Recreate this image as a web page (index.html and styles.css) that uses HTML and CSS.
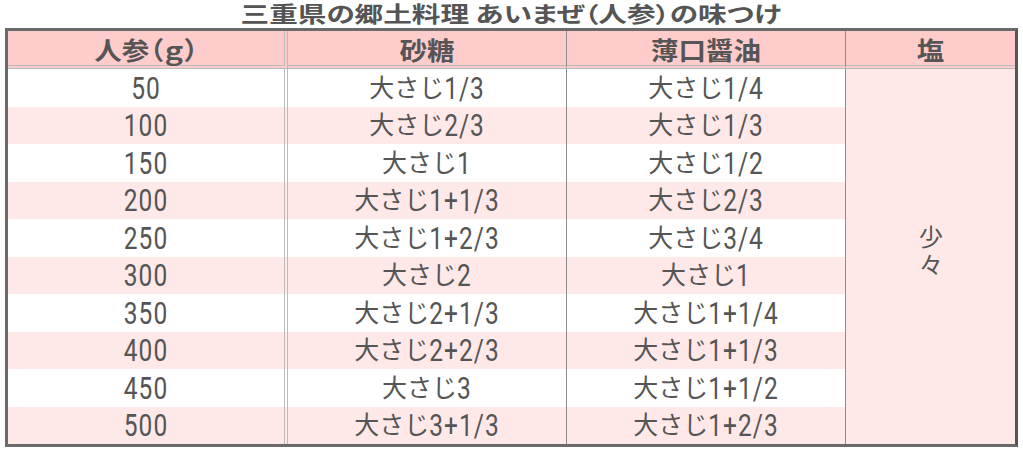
FILE: index.html
```html
<!DOCTYPE html>
<html lang="ja">
<head>
<meta charset="utf-8">
<title>あいまぜ(人参)の味つけ</title>
<link rel="stylesheet" href="styles.css">
</head>
<body>
<div class="wrap">
  <h1 class="title"><span class="title-text">三重県の郷土料理 あいまぜ（人参）の味つけ</span></h1>
  <table class="recipe">
    <colgroup>
      <col class="w1"><col class="w2"><col class="w3"><col class="w4">
    </colgroup>
    <thead>
      <tr>
        <th class="c1"><span class="h">人参（ｇ）</span></th>
        <th class="c2"><span class="h">砂糖</span></th>
        <th class="c3"><span class="h">薄口醤油</span></th>
        <th class="c4"><span class="h">塩</span></th>
      </tr>
    </thead>
    <tbody>
      <tr class="odd"><td class="c1"><span class="n">50</span></td><td class="c2">大さじ<span class="n">1/3</span></td><td class="c3">大さじ<span class="n">1/4</span></td><td class="c4 salt" rowspan="10"><span class="salt-text">少々</span></td></tr>
      <tr class="even"><td class="c1"><span class="n">100</span></td><td class="c2">大さじ<span class="n">2/3</span></td><td class="c3">大さじ<span class="n">1/3</span></td></tr>
      <tr class="odd"><td class="c1"><span class="n">150</span></td><td class="c2">大さじ<span class="n">1</span></td><td class="c3">大さじ<span class="n">1/2</span></td></tr>
      <tr class="even"><td class="c1"><span class="n">200</span></td><td class="c2">大さじ<span class="n">1+1/3</span></td><td class="c3">大さじ<span class="n">2/3</span></td></tr>
      <tr class="odd"><td class="c1"><span class="n">250</span></td><td class="c2">大さじ<span class="n">1+2/3</span></td><td class="c3">大さじ<span class="n">3/4</span></td></tr>
      <tr class="even"><td class="c1"><span class="n">300</span></td><td class="c2">大さじ<span class="n">2</span></td><td class="c3">大さじ<span class="n">1</span></td></tr>
      <tr class="odd"><td class="c1"><span class="n">350</span></td><td class="c2">大さじ<span class="n">2+1/3</span></td><td class="c3">大さじ<span class="n">1+1/4</span></td></tr>
      <tr class="even"><td class="c1"><span class="n">400</span></td><td class="c2">大さじ<span class="n">2+2/3</span></td><td class="c3">大さじ<span class="n">1+1/3</span></td></tr>
      <tr class="odd"><td class="c1"><span class="n">450</span></td><td class="c2">大さじ<span class="n">3</span></td><td class="c3">大さじ<span class="n">1+1/2</span></td></tr>
      <tr class="even"><td class="c1"><span class="n">500</span></td><td class="c2">大さじ<span class="n">3+1/3</span></td><td class="c3">大さじ<span class="n">1+2/3</span></td></tr>
    </tbody>
  </table>
</div>
</body>
</html>
```

FILE: styles.css
```css
html, body {
  margin: 0;
  padding: 0;
  background: #ffffff;
}
body {
  font-family: "Noto Sans CJK JP", "Noto Sans", sans-serif;
  color: #555555;
}
.wrap {
  padding: 0 6px 0 5px;
}
.title {
  margin: 0;
  height: 28px;
  line-height: 25px;
  font-size: 22px;
  font-weight: 700;
  text-align: center;
  color: #555555;
}
.title-text {
  display: inline-block;
  line-height: 25px;
  font-feature-settings: "palt";
  transform: scaleX(1.3);
}
.recipe {
  width: 1013px;
  table-layout: fixed;
  border-collapse: separate;
  border-spacing: 0;
  border: 3px solid #6a6a6a;
  border-right-color: #555555;
}
.w1 { width: 280px; }
.w2 { width: 279px; }
.w3 { width: 279px; }
.w4 { width: 169px; }
.recipe th, .recipe td {
  box-sizing: border-box;
  padding: 0;
  text-align: center;
  vertical-align: middle;
}
.recipe th {
  height: 38px;
  background: #ffcccc;
  font-size: 25px;
  font-weight: 700;
  line-height: 30px;
  border-bottom: 4px double #bbbbbb;
  padding-top: 1px;
}
.h {
  display: inline-block;
  font-feature-settings: "palt";
  transform: scaleX(1.1);
}
.recipe td {
  height: 37.5px;
  font-size: 25px;
  line-height: 30px;
  padding-bottom: 4px;
}
.recipe .c1 { border-right: 4px double #bbbbbb; }
.recipe .c2 { border-right: 1px solid #8c8c8c; }
.recipe .c3 { border-right: 1px solid #8c8c8c; }
.odd td { background: #ffffff; }
.even td { background: #ffe8e8; }
.recipe td.salt {
  background: #ffe8e8;
  padding-bottom: 4px;
}
.salt-text {
  display: inline-block;
  writing-mode: vertical-rl;
  text-orientation: upright;
  font-size: 24px;
  line-height: 30px;
  letter-spacing: 4px;
}
.n {
  display: inline-block;
  font-family: Roboto, "Liberation Sans", sans-serif;
  font-size: 24.5px;
  line-height: 25px;
  letter-spacing: 1px;
  transform: scaleY(1.28);
}
```
